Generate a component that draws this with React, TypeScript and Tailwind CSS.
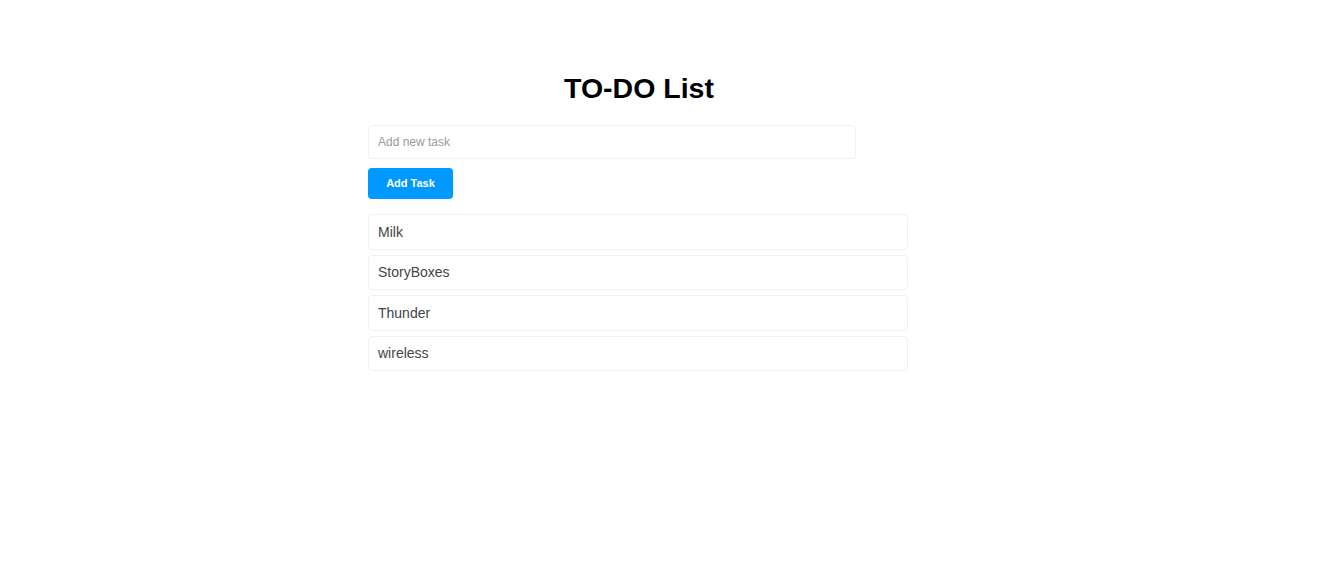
export default function App() {
  const tasks = ['Milk', 'StoryBoxes', 'Thunder', 'wireless']

  return (
    <main className="min-h-screen bg-white pt-[70px] font-['Liberation_Sans',Arial,sans-serif]">
      <div className="ml-[368px] w-[542px]">
        <h1 className="text-center text-[28.5px] leading-[36px] font-bold text-black">
          TO-DO List
        </h1>

        <input
          type="text"
          placeholder="Add new task"
          className="mt-[19px] block h-[34px] w-[488px] rounded border border-[#f0f0f0] px-[9px] text-xs text-[#333] outline-none placeholder:text-[#999]"
        />

        <button className="mt-[9px] h-[31px] w-[85px] rounded bg-[#0099ff] text-[11px] font-bold text-white">
          Add Task
        </button>

        <ul className="mt-[15px] flex w-[540px] flex-col gap-[5px]">
          {tasks.map((task) => (
            <li
              key={task}
              className="flex h-[35.5px] items-center rounded border border-[#f0f0f0] px-[9px] text-sm text-[#444]"
            >
              {task}
            </li>
          ))}
        </ul>
      </div>
    </main>
  )
}
